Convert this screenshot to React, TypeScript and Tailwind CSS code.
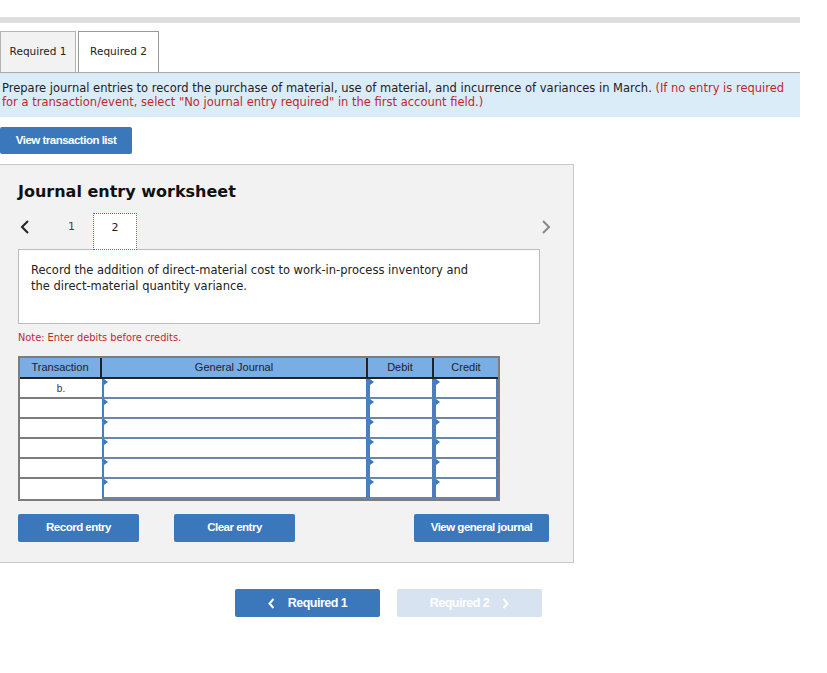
import React from "react";

const rows = ["b.", "", "", "", "", ""];

function InputCell() {
  return (
    <div className="relative h-[20px] bg-white border-x-2 border-b-2 border-x-[#4a7ec0] border-b-[#6a86ab]">
      <span className="absolute left-0 top-0 h-0 w-0 border-y-[3px] border-l-[4px] border-y-transparent border-l-[#3a77bb]" />
    </div>
  );
}

export default function App() {
  return (
    <div
      className="w-[827px] h-[673px] bg-white overflow-hidden"
      style={{ fontFamily: '"DejaVu Sans", Verdana, sans-serif' }}
    >
      <div className="h-[17px]" />
      <div className="h-[6px] w-[800px] bg-[#dedede]" />

      <div className="mt-[8px] flex items-end">
        <div className="flex h-[41px] w-[76px] items-center justify-center border border-b-0 border-[#b4b4b4] bg-[#f2f2f2] text-[10.5px] text-[#222]">
          Required 1
        </div>
        <div className="ml-[2px] flex h-[41px] w-[81px] items-center justify-center border border-b-0 border-[#999] bg-white text-[10.5px] text-[#222]">
          Required 2
        </div>
      </div>

      <div className="w-[800px] border-t border-[#aaa] bg-[#dbecf9] px-[2px] pt-[9px] pb-[8px] text-[11.5px] leading-[13.5px] text-[#222]">
        Prepare journal entries to record the purchase of material, use of material, and incurrence of variances in March.{" "}
        <span className="text-[#c1272d]">
          (If no entry is required for a transaction/event, select "No journal entry required" in the first account field.)
        </span>
      </div>

      <button
        className="mt-[10px] flex h-[27px] w-[132px] items-center justify-center rounded-[2px] bg-[#3a77bb] text-[11.5px] font-bold tracking-[-0.5px] text-white"
        style={{ fontFamily: '"Liberation Sans", Arial, sans-serif' }}
      >
        View transaction list
      </button>

      <div className="mt-[10px] h-[399px] w-[574px] border border-l-0 border-[#c8c8c8] bg-[#f2f2f2] pl-[18px]">
        <div className="pt-[16px] text-[16px] font-bold leading-[22px] text-[#111]">
          Journal entry worksheet
        </div>

        <div className="mt-[10px] flex h-[37px] w-[533px] items-start">
          <svg width="10" height="14" viewBox="0 0 10 14" className="ml-[2px] mt-[7px]">
            <path d="M8 1 L2 7 L8 13" fill="none" stroke="#222" strokeWidth="2" />
          </svg>
          <div className="ml-[38px] mt-[6px] w-[12px] text-[11px] text-[#444]">1</div>
          <div className="relative z-10 ml-[13px] flex h-[37px] w-[44px] justify-center border border-dotted border-[#3a77bb] bg-white pt-[6px] text-[11px] text-[#222]">
            2
          </div>
          <div className="flex-1" />
          <svg width="10" height="14" viewBox="0 0 10 14" className="mt-[7px]">
            <path d="M2 1 L8 7 L2 13" fill="none" stroke="#888" strokeWidth="2" />
          </svg>
        </div>

        <div className="-mt-[1px] h-[75px] w-[522px] border border-[#bbb] bg-white px-[12px] pt-[12px] text-[11.5px] leading-[16px] text-[#222]">
          Record the addition of direct-material cost to work-in-process inventory and
          <br />
          the direct-material quantity variance.
        </div>

        <div className="mt-[8px] text-[9.8px] leading-[12px] text-[#c1272d]">
          Note: Enter debits before credits.
        </div>

        <div
          className="mt-[12px] w-[482px] border-2 border-[#7d7d7d]"
          style={{ fontFamily: '"Liberation Sans", Arial, sans-serif' }}
        >
          <div className="grid grid-cols-[82px_266px_66px_64px] border-b-2 border-[#222] bg-[#79ade4] text-[11px] text-[#222]">
            <div className="flex h-[19px] items-center justify-center border-r-2 border-[#222]">Transaction</div>
            <div className="flex h-[19px] items-center justify-center border-r-2 border-[#222]">General Journal</div>
            <div className="flex h-[19px] items-center justify-center border-r-2 border-[#222]">Debit</div>
            <div className="flex h-[19px] items-center justify-center">Credit</div>
          </div>
          {rows.map((r, i) => (
            <div key={i} className="grid grid-cols-[82px_266px_66px_64px]">
              <div
                className={`flex h-[20px] items-start justify-center bg-white pt-[2px] text-[10px] text-[#333] ${
                  i < rows.length - 1 ? "border-b-2 border-[#7d7d7d]" : ""
                }`}
              >
                {r}
              </div>
              <InputCell />
              <InputCell />
              <InputCell />
            </div>
          ))}
        </div>

        <div
          className="mt-[13px] flex text-[11.5px] font-bold tracking-[-0.5px] text-white"
          style={{ fontFamily: '"Liberation Sans", Arial, sans-serif' }}
        >
          <button className="flex h-[28px] w-[121px] items-center justify-center rounded-[2px] bg-[#3a77bb]">
            Record entry
          </button>
          <button className="ml-[35px] flex h-[28px] w-[121px] items-center justify-center rounded-[2px] bg-[#3a77bb]">
            Clear entry
          </button>
          <button className="ml-[119px] flex h-[28px] w-[135px] items-center justify-center rounded-[2px] bg-[#3a77bb]">
            View general journal
          </button>
        </div>
      </div>

      <div
        className="mt-[26px] flex pl-[235px] text-[12.5px] font-bold tracking-[-0.5px]"
        style={{ fontFamily: '"Liberation Sans", Arial, sans-serif' }}
      >
        <button className="flex h-[28px] w-[145px] items-center justify-center gap-[13px] rounded-[2px] bg-[#3a77bb] text-white">
          <svg width="7" height="11" viewBox="0 0 7 11">
            <path d="M5.5 1 L1.5 5.5 L5.5 10" fill="none" stroke="white" strokeWidth="2" />
          </svg>
          Required 1
        </button>
        <button className="ml-[17px] flex h-[28px] w-[145px] items-center justify-center gap-[13px] rounded-[2px] bg-[#d7e3f1] text-white">
          Required 2
          <svg width="7" height="11" viewBox="0 0 7 11">
            <path d="M1.5 1 L5.5 5.5 L1.5 10" fill="none" stroke="white" strokeWidth="2" />
          </svg>
        </button>
      </div>
    </div>
  );
}
